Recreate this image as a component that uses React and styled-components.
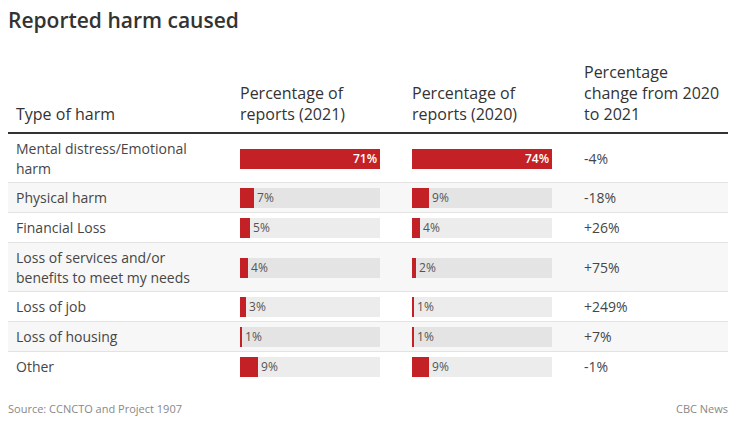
import styled, { createGlobalStyle } from 'styled-components';

const GlobalStyle = createGlobalStyle`
  html, body {
    margin: 0;
    padding: 0;
    background: #ffffff;
  }
  body {
    font-family: "Open Sans", "Liberation Sans", sans-serif;
    color: #333333;
  }
`;

const Chart = styled.div`
  width: 735px;
  height: 421px;
  box-sizing: border-box;
  padding: 6px 7px 0 8px;
  display: flex;
  flex-direction: column;
`;

const Title = styled.h1`
  margin: 0;
  font-size: 21px;
  line-height: 28px;
  font-weight: 600;
  color: #333333;
`;

const Table = styled.table`
  margin-top: 28px;
  width: 720px;
  border-collapse: collapse;
  table-layout: fixed;
`;

const HeadCell = styled.th`
  text-align: left;
  vertical-align: bottom;
  font-size: 16px;
  line-height: 21px;
  font-weight: 400;
  color: #333333;
  padding: 0 8px 7px;
  border-bottom: 2px solid #333333;
`;

const Row = styled.tr`
  background: ${({ $striped }) => ($striped ? '#f7f7f7' : '#ffffff')};
  border-bottom: ${({ $last }) => ($last ? 'none' : '1px solid #e3e3e3')};
`;

const Cell = styled.td`
  font-size: 14px;
  line-height: 19.5px;
  color: #464646;
  padding: 5px 16px 4px 8px;
  vertical-align: middle;
`;

const Track = styled.div`
  width: 140px;
  height: 20px;
  background: rgba(0, 0, 0, 0.075);
  display: flex;
  align-items: center;
`;

const Fill = styled.div`
  height: 100%;
  background: #c42127;
  flex-shrink: 0;
  display: flex;
  align-items: center;
  justify-content: flex-end;
  box-sizing: border-box;
  padding-right: ${({ $inside }) => ($inside ? '3px' : '0')};
`;

const InsideLabel = styled.span`
  color: #ffffff;
  font-size: 12px;
  font-weight: 600;
  line-height: 20px;
`;

const OutsideLabel = styled.span`
  color: #555555;
  font-size: 12px;
  line-height: 20px;
  margin-left: 3px;
`;

const Footer = styled.div`
  margin-top: auto;
  height: 20px;
  display: flex;
  justify-content: space-between;
  align-items: flex-start;
  font-size: 11px;
  line-height: 16px;
  color: #888888;
`;

const rows = [
  { type: 'Mental distress/Emotional harm', y21: 71, y20: 74, change: '-4%' },
  { type: 'Physical harm', y21: 7, y20: 9, change: '-18%' },
  { type: 'Financial Loss', y21: 5, y20: 4, change: '+26%' },
  { type: 'Loss of services and/or benefits to meet my needs', y21: 4, y20: 2, change: '+75%' },
  { type: 'Loss of job', y21: 3, y20: 1, change: '+249%' },
  { type: 'Loss of housing', y21: 1, y20: 1, change: '+7%' },
  { type: 'Other', y21: 9, y20: 9, change: '-1%' },
];

const max21 = Math.max(...rows.map((r) => r.y21));
const max20 = Math.max(...rows.map((r) => r.y20));

const Bar = ({ value, max }) => {
  const inside = value > 30;
  const width = Math.max(2, Math.round((value / max) * 140));
  return (
    <Track>
      <Fill $inside={inside} style={{ width }}>
        {inside && <InsideLabel>{value}%</InsideLabel>}
      </Fill>
      {!inside && <OutsideLabel>{value}%</OutsideLabel>}
    </Track>
  );
};

const App = () => (
  <>
    <GlobalStyle />
    <Chart>
      <Title>Reported harm caused</Title>
      <Table>
        <colgroup>
          <col style={{ width: 224 }} />
          <col style={{ width: 172 }} />
          <col style={{ width: 172 }} />
          <col style={{ width: 152 }} />
        </colgroup>
        <thead>
          <tr>
            <HeadCell>Type of harm</HeadCell>
            <HeadCell>Percentage of reports (2021)</HeadCell>
            <HeadCell>Percentage of reports (2020)</HeadCell>
            <HeadCell>Percentage change from 2020 to 2021</HeadCell>
          </tr>
        </thead>
        <tbody>
          {rows.map((r, i) => (
            <Row key={r.type} $striped={i % 2 === 1} $last={i === rows.length - 1}>
              <Cell>{r.type}</Cell>
              <Cell><Bar value={r.y21} max={max21} /></Cell>
              <Cell><Bar value={r.y20} max={max20} /></Cell>
              <Cell>{r.change}</Cell>
            </Row>
          ))}
        </tbody>
      </Table>
      <Footer>
        <span>Source: CCNCTO and Project 1907</span>
        <span>CBC News</span>
      </Footer>
    </Chart>
  </>
);

export default App;
